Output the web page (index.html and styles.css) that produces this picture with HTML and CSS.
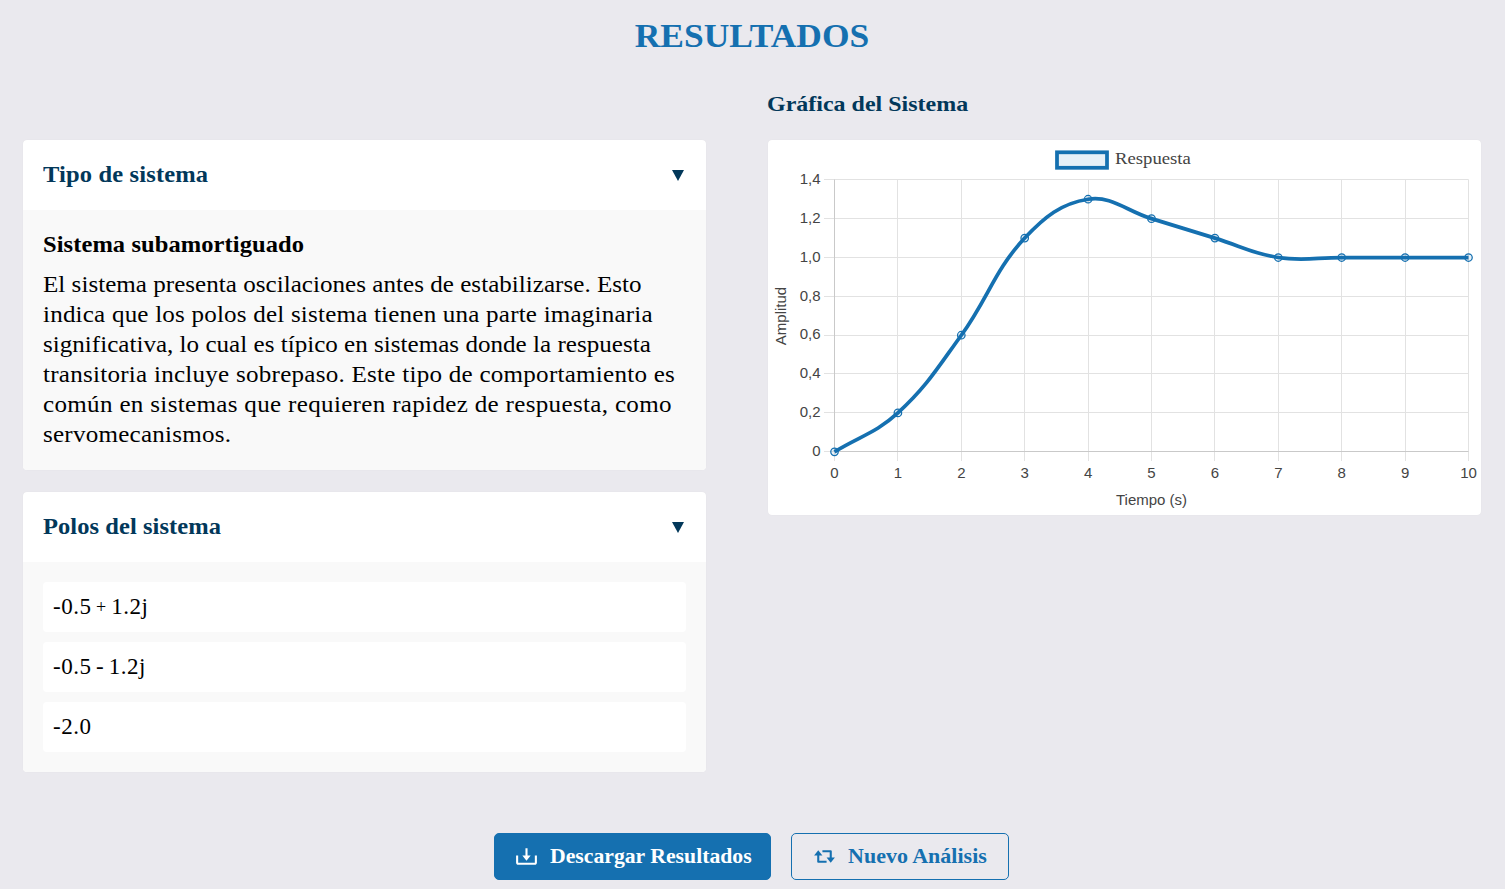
FILE: index.html
```
<!DOCTYPE html>
<html lang="es">
<head>
<meta charset="utf-8">
<title>Resultados</title>
<link rel="stylesheet" href="styles.css">
</head>
<body>
<main class="page">
  <h1 class="title">RESULTADOS</h1>
  <div class="columns">
    <div class="panels">
      <section class="card">
        <header class="card-head"><h2 class="heading heading-type">Tipo de sistema</h2><svg class="caret" viewBox="0 0 12 11"><path d="M0 0h12L6 11z"/></svg></header>
        <div class="card-body">
          <h3 class="subheading">Sistema subamortiguado</h3>
          <p class="text">
            <span class="line l1">El sistema presenta oscilaciones antes de estabilizarse. Esto</span>
            <span class="line l2">indica que los polos del sistema tienen una parte imaginaria</span>
            <span class="line l3">significativa, lo cual es típico en sistemas donde la respuesta</span>
            <span class="line l4">transitoria incluye sobrepaso. Este tipo de comportamiento es</span>
            <span class="line l5">común en sistemas que requieren rapidez de respuesta, como</span>
            <span class="line l6">servomecanismos.</span>
          </p>
        </div>
      </section>
      <section class="card">
        <header class="card-head"><h2 class="heading">Polos del sistema</h2><svg class="caret" viewBox="0 0 12 11"><path d="M0 0h12L6 11z"/></svg></header>
        <ul class="card-body poles">
          <li class="pole">-0.5 <span class="plus">+</span> 1.2j</li>
          <li class="pole">-0.5 - 1.2j</li>
          <li class="pole">-2.0</li>
        </ul>
      </section>
    </div>
    <section class="graph">
      <h2 class="heading heading-graph">Gráfica del Sistema</h2>
      <div class="chart-card"><svg id="chart" class="chart" viewBox="0 0 713 375"></svg></div>
    </section>
  </div>
  <div class="actions">
    <button class="btn btn-primary"><svg class="icon" viewBox="0 0 24 24"><path d="m12 16 4-5h-3V4h-2v7H8z"/><path d="M20 18H4v-7H2v7c0 1.103.897 2 2 2h16c1.103 0 2-.897 2-2v-7h-2v7z"/></svg><span class="label-download">Descargar Resultados</span></button>
    <button class="btn btn-outline"><svg class="icon" viewBox="0 0 24 24"><path d="M19 7a1 1 0 0 0-1-1h-8v2h7v5h-3l3.969 5L22 13h-3V7zM5 17a1 1 0 0 0 1 1h8v-2H7v-5h3L6 6l-4 5h3v6z"/></svg><span class="label-new">Nuevo Análisis</span></button>
  </div>
</main>
<script src="chart.js"></script>
</body>
</html>
```
FILE: styles.css
```
* { box-sizing: border-box; }
body { margin: 0; background: #eae9ee; font-family: "Liberation Serif", serif; color: #000; }
h1, h2, h3, p, ul { margin: 0; padding: 0; }
.page { display: flex; flex-direction: column; height: 889px; overflow: hidden; }
.title { padding: 16px 1px 0 0; line-height: 40px; text-align: center; font-size: 34px; transform: scaleX(1.043); color: #1570b0; }
.columns { display: flex; gap: 62px; padding: 33px 24px 0 23px; }
.panels { display: flex; flex-direction: column; gap: 22px; width: 683px; padding-top: 51px; }
.card { background: #fff; border-radius: 4px; overflow: hidden; box-shadow: 0 0 1px rgba(0, 0, 0, .08); }
.card-head { display: flex; align-items: center; justify-content: space-between; height: 70px; padding: 0 22px 0 20px; }
/* Wide-set serif: glyphs are stretched horizontally from their left edge */
.heading, .subheading, .line { transform: scaleX(1.09); transform-origin: left; }
.heading { font-size: 22.5px; line-height: 30px; letter-spacing: .05px; color: #02385a; }
.heading-type { letter-spacing: .13px; }
.heading-graph { font-size: 22px; letter-spacing: 0; margin-left: -1px; }
.caret { width: 12px; height: 11px; fill: #02385a; }
.card-body { padding: 20px; background: #f9f9f9; }
.subheading { font-size: 22.5px; line-height: 30px; letter-spacing: .06px; margin-bottom: 10px; }
.text { font-size: 23px; line-height: 30px; }
.line { display: block; width: 590px; white-space: nowrap; }
.l1 { letter-spacing: .02px; }
.l2 { letter-spacing: .18px; }
.l3 { letter-spacing: .01px; }
.l4 { letter-spacing: .23px; }
.l5 { letter-spacing: .29px; }
.l6 { letter-spacing: .21px; }
.poles { display: flex; flex-direction: column; gap: 10px; list-style: none; }
.pole { padding: 10px; height: 50px; line-height: 30px; background: #fff; border-radius: 4px; font-size: 23px; letter-spacing: .5px; word-spacing: -1.7px; }
.plus { font-size: 18px; vertical-align: 1px; line-height: 1; }
.graph { width: 713px; }
.chart-card { display: flex; margin-top: 21px; background: #fff; border-radius: 4px; box-shadow: 0 0 1px rgba(0, 0, 0, .08); }
.chart { width: 713px; height: 375px; font-family: "Liberation Sans", Arial, sans-serif; font-size: 15px; fill: #444; }
.legend { font-family: "Liberation Serif", serif; font-size: 17px; }
.grid { stroke: #e2e2e2; }
.axis { stroke: #c9c9c9; }
.curve { fill: none; stroke: #1570b0; stroke-width: 3.75; }
.point, .swatch { fill: rgba(21, 112, 176, .1); stroke: #1570b0; stroke-width: 1.25; }
.swatch { stroke-width: 3.75; }
.actions { display: flex; justify-content: center; gap: 20px; padding: 61px 2px 0 0; }
.btn { display: flex; align-items: center; gap: 11px; height: 47px; padding: 0 19px; border: 1px solid #1570b0; border-radius: 5px; font: bold 21px "Liberation Serif", serif; white-space: nowrap; }
.btn-primary { width: 277px; background: #1570b0; color: #fff; }
.btn-outline { width: 218px; padding-left: 20px; background: transparent; color: #1570b0; }
.icon { width: 25px; height: 25px; flex: none; fill: currentColor; }
.label-download { transform: scaleX(1.034); transform-origin: left; }
.label-new { transform: scaleX(1.048); transform-origin: left; }
```
FILE: chart.js
```
const values = [0, 0.2, 0.6, 1.1, 1.3, 1.2, 1.1, 1, 1, 1, 1];
const yLabels = ['0', '0,2', '0,4', '0,6', '0,8', '1,0', '1,2', '1,4'];
const left = 66.5, right = 700.5, top0 = 39.5, bottom = 311.5;
const px = i => left + i * (right - left) / 10;
const py = v => bottom - v * (bottom - top0) / 1.4;
const snap = n => Math.round(n) + 0.5;
const line = (cls, x1, y1, x2, y2) => `<line class="${cls}" x1="${x1}" y1="${y1}" x2="${x2}" y2="${y2}"/>`;
let out = '';

values.forEach((v, i) => {
  const x = snap(px(i) - 0.5);
  out += line('grid', x, top0, x, 321);
  out += `<text x="${px(i)}" y="338" text-anchor="middle">${i}</text>`;
});
yLabels.forEach((label, i) => {
  const y = snap(py(i * 0.2) - 0.4);
  out += line('grid', 56, y, right, y);
  out += `<text x="52.5" y="${py(i * 0.2) + 4.5}" text-anchor="end">${label}</text>`;
});
out += line('axis', left, top0, left, bottom) + line('axis', left, bottom, right, bottom);
out += '<text x="383.5" y="365" text-anchor="middle">Tiempo (s)</text>';
out += '<text transform="translate(18 176) rotate(-90)" text-anchor="middle">Amplitud</text>';
out += '<rect class="swatch" x="289" y="12.3" width="50" height="15.5"/><text class="legend" transform="translate(347 24) scale(1.1 1)">Respuesta</text>';

// Cubic spline with tension proportional to neighbour distances
const pts = values.map((v, i) => [px(i), py(v) + 0.3]);
const clamp = y => Math.max(top0, Math.min(bottom, y));
const controls = pts.map((p, i) => {
  const a = pts[i - 1] || p, b = pts[i + 1] || p;
  const d1 = Math.hypot(p[0] - a[0], p[1] - a[1]);
  const d2 = Math.hypot(b[0] - p[0], b[1] - p[1]);
  const f1 = 0.4 * d1 / (d1 + d2), f2 = 0.4 * d2 / (d1 + d2);
  const dx = b[0] - a[0], dy = b[1] - a[1];
  return [p[0] - f1 * dx, clamp(p[1] - f1 * dy), p[0] + f2 * dx, clamp(p[1] + f2 * dy)];
});
let d = `M${pts[0]}`;
for (let i = 1; i < pts.length; i++) {
  d += `C${controls[i - 1].slice(2)} ${controls[i].slice(0, 2)} ${pts[i]}`;
}
out += `<path class="curve" d="${d}"/>`;
pts.forEach(p => { out += `<circle class="point" cx="${p[0]}" cy="${p[1]}" r="3.75"/>`; });
document.getElementById('chart').innerHTML = out;
```
